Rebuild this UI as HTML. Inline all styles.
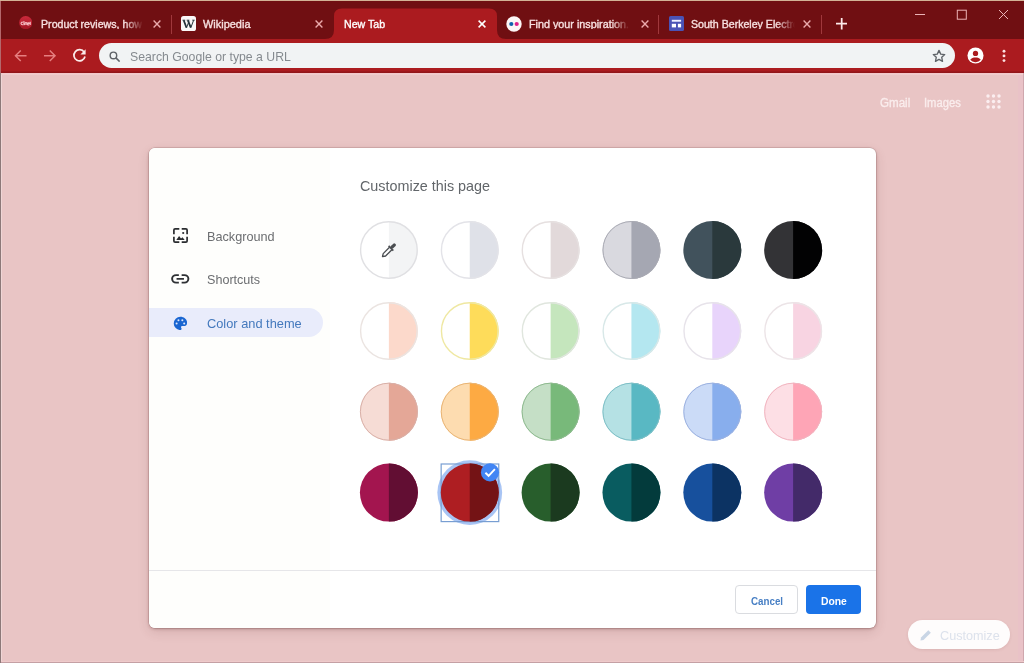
<!DOCTYPE html>
<html>
<head>
<meta charset="utf-8">
<title>New Tab</title>
<style>
*{box-sizing:border-box;margin:0;padding:0}
html,body{width:1024px;height:663px;overflow:hidden}
body{font-family:"Liberation Sans",sans-serif;background:#e9c5c5;position:relative}
.abs{position:absolute}
.t{position:absolute;white-space:nowrap;line-height:1;transform-origin:0 0}
#topline{left:0;top:0;width:1024px;height:1.400px;background:#d3b396}
#tabstrip{left:0;top:1px;width:1024px;height:38px;background:#700f12}
#toolbar{left:0;top:39px;width:1024px;height:34px;background:#ab1b1f}
#tbline{left:0;top:70.500px;width:1024px;height:2px;background:linear-gradient(#a1191d,#8e1619)}
#pageline{left:0;top:72.500px;width:1024px;height:2.500px;background:linear-gradient(#f6c6c9,#eccfcf)}
.sep{position:absolute;top:14.500px;width:1.500px;height:19px;background:#a0383c;margin-left:-.25px}
#omni{left:98.500px;top:43px;width:856.500px;height:25px;border-radius:13px;background:#f1f3f4}
#page{left:0;top:75px;width:1024px;height:588px;background:#e9c5c5}
#dialog{left:149px;top:148px;width:727px;height:480px;background:#fff;border-radius:6px;box-shadow:0 0 0 .5px rgba(110,70,70,.3),0 1px 3px rgba(90,40,40,.32),0 4px 12px rgba(90,40,40,.14);overflow:hidden}
#leftpanel{left:149px;top:148px;width:181px;height:480px;background:#fefefc;border-radius:6px 0 0 6px}
#pill{left:149px;top:308px;width:174px;height:29px;background:#e9ecfb;border-radius:0 15px 15px 0}
#divider{left:149px;top:570px;width:727px;height:1px;background:#e6e6e9}
#cancel{left:735px;top:585px;width:63px;height:29px;border:1px solid #dadce0;border-radius:4px;background:#fff}
#done{left:806px;top:585px;width:55px;height:29px;border-radius:4px;background:#1a73e8}
#custom{left:908px;top:620px;width:102px;height:29px;border-radius:15px;background:rgba(255,255,255,.95);box-shadow:0 1px 3px rgba(120,60,60,.12)}
#rightedge{left:1018px;top:75px;width:5px;height:586px;background:#e9c2c7}
#rightedge2{left:1023px;top:73px;width:1px;height:590px;background:#cfa7ad}
#botedge{left:0;top:661px;width:1024px;height:1px;background:#efcacb}
#botedge2{left:0;top:662px;width:1024px;height:1px;background:#c4a0a4}
#leftedge{left:0;top:1px;width:1px;height:72px;background:#b4686c}
#leftedge2{left:0;top:73px;width:1px;height:590px;background:#8d7878}
#leftedge3{left:1px;top:75px;width:1px;height:586px;background:#efd6d6}
</style>
</head>
<body>
<div class="abs" id="page"></div>
<div class="abs" id="tabstrip"></div>
<div class="abs" id="toolbar"></div>
<div class="abs" id="topline"></div>
<div class="abs" id="tbline"></div><div class="abs" id="pageline"></div>
<svg class="abs" style="left:320px;top:0" width="200" height="40" viewBox="320 0 200 40"><path d="M325 39Q334 39 334 30V16Q334 8.500 342 8.500H489Q497 8.500 497 16V30Q497 39 506 39Z" fill="#ab1b1f"/></svg>

<!-- favicons -->
<svg class="abs" style="left:18.700px;top:16px" width="13.400" height="13.400" viewBox="0 0 15 15"><defs><linearGradient id="cg" x1="0" y1="0" x2="0" y2="1"><stop offset="0" stop-color="#cc2a3c"/><stop offset="1" stop-color="#a31624"/></linearGradient></defs><circle cx="7.500" cy="7.500" r="7.400" fill="url(#cg)"/><g fill="none" stroke="#f4b9bf" stroke-width="1.300"><path d="M4.300 7.200A1.300 1.300 0 1 0 4.300 9.400M5.500 5.500V10.500M6.800 10V8.300A1 1 0 0 1 8.800 8.300V10M11.400 9.600A1.200 1.200 0 1 1 11.600 8.300H9.900M12.600 6.500V10"/></g></svg>
<svg class="abs" style="left:181.400px;top:16.300px" width="15" height="15" viewBox="0 0 15 15"><rect x="0" y="0" width="15" height="15" rx="2.600" fill="#fbf8f8"/><g stroke="#24323a" fill="none"><path d="M2.700 4.300L5.500 11.700M6.900 4.300L9.800 11.700" stroke-width="1.800"/><path d="M5.500 11.700L7.900 5.600M9.800 11.700L12.600 4.300" stroke-width="1"/><path d="M1.500 4.200H4.200M5.700 4.200H8.400M11.200 4.200H13.700" stroke-width=".9"/></g></svg>
<svg class="abs" style="left:506px;top:16px" width="16" height="16" viewBox="0 0 16 16"><circle cx="8" cy="8" r="7.700" fill="#fdf6f6"/><circle cx="5.300" cy="8" r="2.100" fill="#1261ad"/><circle cx="10.700" cy="8" r="2.100" fill="#e0218a"/></svg>
<svg class="abs" style="left:669px;top:16.200px" width="15" height="15" viewBox="0 0 15 15"><rect width="15" height="15" rx="1.600" fill="#4a53b6"/><rect x="2.800" y="3.800" width="9.300" height="1.900" fill="#eef0ff"/><rect x="2.800" y="7.800" width="4.200" height="3.600" fill="#fff"/><rect x="8.900" y="7.800" width="3.200" height="3.600" fill="#fff"/></svg>

<div class="t" style="left:41px;top:18.71px;font-size:10.5px;color:#f7e0e0;transform:scaleX(1.012);font-weight:normal;width:100.8px;overflow:hidden;-webkit-mask-image:linear-gradient(90deg,#000 0,#000 82%,transparent 100%);mask-image:linear-gradient(90deg,#000 0,#000 82%,transparent 100%);-webkit-text-stroke:0.350px currentColor;">Product reviews, how</div>
<div class="t" style="left:203.3px;top:18.71px;font-size:10.5px;color:#f7e0e0;transform:scaleX(1.043);font-weight:normal;-webkit-text-stroke:0.350px currentColor;">Wikipedia</div>
<div class="t" style="left:344.4px;top:18.71px;font-size:10.5px;color:#ffffff;transform:scaleX(1.012);font-weight:normal;-webkit-text-stroke:0.350px currentColor;">New Tab</div>
<div class="t" style="left:528.9px;top:18.71px;font-size:10.5px;color:#f7e0e0;transform:scaleX(1.026);font-weight:normal;width:98.4px;overflow:hidden;-webkit-mask-image:linear-gradient(90deg,#000 0,#000 82%,transparent 100%);mask-image:linear-gradient(90deg,#000 0,#000 82%,transparent 100%);-webkit-text-stroke:0.350px currentColor;">Find your inspiration.</div>
<div class="t" style="left:691.3px;top:18.71px;font-size:10.5px;color:#f7e0e0;transform:scaleX(1.01);font-weight:normal;width:103.0px;overflow:hidden;-webkit-mask-image:linear-gradient(90deg,#000 0,#000 82%,transparent 100%);mask-image:linear-gradient(90deg,#000 0,#000 82%,transparent 100%);-webkit-text-stroke:0.350px currentColor;">South Berkeley Electro</div>

<div class="sep" style="left:171px"></div>
<div class="sep" style="left:658px"></div>
<div class="sep" style="left:821px"></div>
<svg class="abs" style="left:151.6px;top:19px" width="10" height="10" viewBox="0 0 10 10"><path d="M1.600 1.600L8.400 8.400M8.400 1.600L1.600 8.400" stroke="#eaa9ab" stroke-width="1.4"/></svg><svg class="abs" style="left:314.4px;top:19px" width="10" height="10" viewBox="0 0 10 10"><path d="M1.600 1.600L8.400 8.400M8.400 1.600L1.600 8.400" stroke="#eaa9ab" stroke-width="1.4"/></svg><svg class="abs" style="left:477.1px;top:19px" width="10" height="10" viewBox="0 0 10 10"><path d="M1.600 1.600L8.400 8.400M8.400 1.600L1.600 8.400" stroke="#fff" stroke-width="1.5"/></svg><svg class="abs" style="left:639.5px;top:19px" width="10" height="10" viewBox="0 0 10 10"><path d="M1.600 1.600L8.400 8.400M8.400 1.600L1.600 8.400" stroke="#eaa9ab" stroke-width="1.4"/></svg><svg class="abs" style="left:802px;top:19px" width="10" height="10" viewBox="0 0 10 10"><path d="M1.600 1.600L8.400 8.400M8.400 1.600L1.600 8.400" stroke="#eaa9ab" stroke-width="1.4"/></svg>

<svg class="abs" style="left:836px;top:18.300px" width="11.400" height="11.400" viewBox="0 0 12 12"><path d="M6 0V12M0 6H12" stroke="#fdeaea" stroke-width="1.850"/></svg>
<svg class="abs" style="left:914px;top:8px" width="100" height="14" viewBox="0 0 100 14"><path d="M1 6.500H11" stroke="#ebb3b6" stroke-width="1"/><rect x="43.300" y="2.200" width="9" height="9" fill="none" stroke="#ebb3b6" stroke-width="1"/><path d="M85 2L94 11M94 2L85 11" stroke="#ebb3b6" stroke-width="1"/></svg>

<!-- toolbar icons -->
<svg class="abs" style="left:13.800px;top:48.700px" width="13.500" height="13.500" viewBox="0 0 14 14"><path d="M13 7H2M7 1.500L1.500 7L7 12.500" fill="none" stroke="#e67f80" stroke-width="1.500"/></svg>
<svg class="abs" style="left:43.300px;top:48.700px" width="13.500" height="13.500" viewBox="0 0 14 14"><path d="M1 7H12M7 1.500L12.500 7L7 12.500" fill="none" stroke="#e67f80" stroke-width="1.500"/></svg>
<svg class="abs" style="left:72px;top:48px" width="15" height="15" viewBox="0 0 15 15"><path d="M12.200 4.200A5.600 5.600 0 1 0 13 8.500" fill="none" stroke="#fbeaea" stroke-width="1.700"/><path d="M13.600 1.200V6.400H8.400Z" fill="#fbeaea"/></svg>

<div class="abs" id="omni"></div>
<svg class="abs" style="left:109.300px;top:50.500px" width="11.500" height="11.500" viewBox="0 0 13 13"><circle cx="5" cy="5" r="3.700" fill="none" stroke="#5f6368" stroke-width="1.600"/><path d="M7.800 7.800L12 12" stroke="#5f6368" stroke-width="1.700"/></svg>
<div class="t" style="left:129.5px;top:49.57px;font-size:13.5px;color:#858a8f;transform:scaleX(0.908);font-weight:normal;">Search Google or type a URL</div>
<svg class="abs" style="left:931px;top:48px" width="16" height="16" viewBox="0 0 24 24"><path d="M12 3.600l2.600 5.600 6 .7-4.500 4.100 1.200 6-5.300-3-5.300 3 1.200-6L3.400 9.900l6-.7z" fill="none" stroke="#5f6368" stroke-width="2" stroke-linejoin="round"/></svg>
<svg class="abs" style="left:966.800px;top:47.300px" width="17" height="17" viewBox="0 0 18 18"><circle cx="9" cy="9" r="8.500" fill="#fff"/><circle cx="9" cy="6.800" r="2.800" fill="#ab1b1f"/><path d="M3.400 13.600C4.600 11.600 6.600 11 9 11s4.400.6 5.600 2.600A7 7 0 0 1 9 16.200a7 7 0 0 1-5.600-2.600z" fill="#ab1b1f"/></svg>
<svg class="abs" style="left:1002.250px;top:48px" width="4" height="16" viewBox="0 0 4 16"><circle cx="2" cy="3.200" r="1.450" fill="#fbe2e2"/><circle cx="2" cy="7.900" r="1.450" fill="#fbe2e2"/><circle cx="2" cy="12.600" r="1.450" fill="#fbe2e2"/></svg>

<!-- NTP links -->
<div class="t" style="left:879.7px;top:97.04px;font-size:12px;color:#faeded;transform:scaleX(0.965);font-weight:normal;-webkit-text-stroke:0.300px currentColor;">Gmail</div>
<div class="t" style="left:923.8px;top:97.04px;font-size:12px;color:#faeded;transform:scaleX(0.935);font-weight:normal;-webkit-text-stroke:0.300px currentColor;">Images</div>
<svg class="abs" style="left:986px;top:94.100px" width="15" height="15" viewBox="0 0 15 15" fill="#fbeef0"><circle cx="2" cy="2" r="1.700"/><circle cx="7.500" cy="2" r="1.700"/><circle cx="13" cy="2" r="1.700"/><circle cx="2" cy="7.500" r="1.700"/><circle cx="7.500" cy="7.500" r="1.700"/><circle cx="13" cy="7.500" r="1.700"/><circle cx="2" cy="13" r="1.700"/><circle cx="7.500" cy="13" r="1.700"/><circle cx="13" cy="13" r="1.700"/></svg>

<div class="abs" id="custom"></div>
<svg class="abs" style="left:920px;top:629px" width="12" height="12" viewBox="0 0 12 12"><path d="M0.500 11.500l.5-3L8.300 1.200l2.500 2.500L3.500 11z" fill="#c9d5e5"/></svg>
<div class="t" style="left:939.8px;top:628.75px;font-size:13px;color:#dde2ec;transform:scaleX(0.972);font-weight:normal;">Customize</div>

<!-- dialog -->
<div class="abs" id="dialog"></div><div class="abs" id="leftpanel"></div>
<div class="t" style="left:359.9px;top:178.53px;font-size:14.5px;color:#62666a;transform:scaleX(0.99);font-weight:normal;">Customize this page</div>
<div class="abs" id="pill"></div>
<div class="t" style="left:206.9px;top:229.70px;font-size:13px;color:#6b6d70;transform:scaleX(0.975);font-weight:normal;">Background</div>
<div class="t" style="left:206.9px;top:273.00px;font-size:13px;color:#6b6d70;transform:scaleX(0.968);font-weight:normal;">Shortcuts</div>
<div class="t" style="left:206.9px;top:316.50px;font-size:13px;color:#4479bd;transform:scaleX(0.985);font-weight:normal;">Color and theme</div>

<svg class="abs" style="left:172.800px;top:228.100px" width="15" height="15" viewBox="0 0 15 15" fill="none" stroke="#2a2c2f" stroke-width="1.700"><path d="M0.900 6.300V2.100Q0.900 0.900 2.100 0.900H6.300M8.700 0.900H12.900Q14.100 0.900 14.100 2.100V6.300M14.100 8.700V12.900Q14.100 14.100 12.900 14.100H8.700M6.300 14.100H2.100Q0.900 14.100 0.900 12.900V8.700"/><path d="M3.300 11.900L6.100 8.100L8 10.500L9.500 9.200L11.700 11.900Z" fill="#2a2c2f" stroke="none"/><circle cx="10.200" cy="5" r="1.100" fill="#2a2c2f" stroke="none"/></svg>
<svg class="abs" style="left:171px;top:274.300px" width="18.500" height="9.700" viewBox="0 0 20 11" preserveAspectRatio="none" fill="none" stroke="#2e3134" stroke-width="2.100"><path d="M8.500 1.200H5.500a4.300 4.300 0 0 0 0 8.600H8.500M11.500 1.200H14.500a4.300 4.300 0 0 1 0 8.600H11.500M6 5.500H14"/></svg>
<svg class="abs" style="left:172.600px;top:315.600px" width="14.800" height="14.800" viewBox="0 0 16 16"><path d="M8 .8a7.200 7.200 0 0 0 0 14.400c.8 0 1.300-.6 1.300-1.300 0-.4-.1-.6-.3-.9-.2-.2-.3-.5-.3-.8 0-.7.600-1.300 1.300-1.300h1.500a3.700 3.700 0 0 0 3.700-3.700C15.200 3.600 12 .8 8 .8z" fill="#1a66d1"/><circle cx="3.900" cy="8" r="1.100" fill="#dfe8fb"/><circle cx="5.900" cy="4.600" r="1.100" fill="#dfe8fb"/><circle cx="10.100" cy="4.600" r="1.100" fill="#dfe8fb"/><circle cx="12.100" cy="8" r="1.100" fill="#dfe8fb"/></svg>

<svg class="abs" id="grid" style="left:340px;top:200px" width="520" height="340" viewBox="340 200 520 340">
<circle cx="388.9" cy="250" r="29" fill="#ffffff"/>
<path d="M388.9 221A29 29 0 0 1 388.9 279Z" fill="#f3f4f5"/>
<circle cx="388.9" cy="250" r="28.3" fill="none" stroke="#e0e0e3" stroke-width="1.4"/>
<circle cx="469.75" cy="250" r="29" fill="#ffffff"/>
<path d="M469.75 221A29 29 0 0 1 469.75 279Z" fill="#dfe1e8"/>
<circle cx="469.75" cy="250" r="28.3" fill="none" stroke="#e3e3e8" stroke-width="1.4"/>
<circle cx="550.6" cy="250" r="29" fill="#ffffff"/>
<path d="M550.6 221A29 29 0 0 1 550.6 279Z" fill="#e2d9da"/>
<circle cx="550.6" cy="250" r="28.3" fill="none" stroke="#e6e0e0" stroke-width="1.4"/>
<circle cx="631.45" cy="250" r="29" fill="#d9d9df"/>
<path d="M631.45 221A29 29 0 0 1 631.45 279Z" fill="#a5a7b2"/>
<circle cx="631.45" cy="250" r="28.5" fill="none" stroke="#a9aab3" stroke-width="1.0"/>
<circle cx="712.3" cy="250" r="29" fill="#41525c"/>
<path d="M712.3 221A29 29 0 0 1 712.3 279Z" fill="#2a393c"/>
<circle cx="793.15" cy="250" r="29" fill="#333336"/>
<path d="M793.15 221A29 29 0 0 1 793.15 279Z" fill="#020203"/>
<circle cx="388.9" cy="331" r="29" fill="#ffffff"/>
<path d="M388.9 302A29 29 0 0 1 388.9 360Z" fill="#fcd9cb"/>
<circle cx="388.9" cy="331" r="28.3" fill="none" stroke="#ebe4e1" stroke-width="1.4"/>
<circle cx="469.75" cy="331" r="29" fill="#ffffff"/>
<path d="M469.75 302A29 29 0 0 1 469.75 360Z" fill="#fedc5a"/>
<circle cx="469.75" cy="331" r="28.3" fill="none" stroke="#efe8a2" stroke-width="1.4"/>
<circle cx="550.6" cy="331" r="29" fill="#ffffff"/>
<path d="M550.6 302A29 29 0 0 1 550.6 360Z" fill="#c5e6bd"/>
<circle cx="550.6" cy="331" r="28.3" fill="none" stroke="#e0e6de" stroke-width="1.4"/>
<circle cx="631.45" cy="331" r="29" fill="#ffffff"/>
<path d="M631.45 302A29 29 0 0 1 631.45 360Z" fill="#b4e7f0"/>
<circle cx="631.45" cy="331" r="28.3" fill="none" stroke="#d8e8e8" stroke-width="1.4"/>
<circle cx="712.3" cy="331" r="29" fill="#ffffff"/>
<path d="M712.3 302A29 29 0 0 1 712.3 360Z" fill="#e8d4fb"/>
<circle cx="712.3" cy="331" r="28.3" fill="none" stroke="#e7e3ea" stroke-width="1.4"/>
<circle cx="793.15" cy="331" r="29" fill="#ffffff"/>
<path d="M793.15 302A29 29 0 0 1 793.15 360Z" fill="#f8d4e2"/>
<circle cx="793.15" cy="331" r="28.3" fill="none" stroke="#ece4e7" stroke-width="1.4"/>
<circle cx="388.9" cy="411.7" r="29" fill="#f6dcd5"/>
<path d="M388.9 382.7A29 29 0 0 1 388.9 440.7Z" fill="#e4a797"/>
<circle cx="388.9" cy="411.7" r="28.5" fill="none" stroke="#d9b0a8" stroke-width="1.0"/>
<circle cx="469.75" cy="411.7" r="29" fill="#fddcb0"/>
<path d="M469.75 382.7A29 29 0 0 1 469.75 440.7Z" fill="#fdaa43"/>
<circle cx="469.75" cy="411.7" r="28.5" fill="none" stroke="#e9b576" stroke-width="1.0"/>
<circle cx="550.6" cy="411.7" r="29" fill="#c5dfc6"/>
<path d="M550.6 382.7A29 29 0 0 1 550.6 440.7Z" fill="#78b97a"/>
<circle cx="550.6" cy="411.7" r="28.5" fill="none" stroke="#8fba90" stroke-width="1.0"/>
<circle cx="631.45" cy="411.7" r="29" fill="#b5e1e4"/>
<path d="M631.45 382.7A29 29 0 0 1 631.45 440.7Z" fill="#59b8c3"/>
<circle cx="631.45" cy="411.7" r="28.5" fill="none" stroke="#7fbfc6" stroke-width="1.0"/>
<circle cx="712.3" cy="411.7" r="29" fill="#cbdbf7"/>
<path d="M712.3 382.7A29 29 0 0 1 712.3 440.7Z" fill="#88aeed"/>
<circle cx="712.3" cy="411.7" r="28.5" fill="none" stroke="#9db2e0" stroke-width="1.0"/>
<circle cx="793.15" cy="411.7" r="29" fill="#fddfe5"/>
<path d="M793.15 382.7A29 29 0 0 1 793.15 440.7Z" fill="#fea5b6"/>
<circle cx="793.15" cy="411.7" r="28.5" fill="none" stroke="#f1b5c0" stroke-width="1.0"/>
<circle cx="388.9" cy="492.6" r="29" fill="#a3154f"/>
<path d="M388.9 463.6A29 29 0 0 1 388.9 521.6Z" fill="#620e33"/>
<circle cx="469.75" cy="492.6" r="32.4" fill="#a8c4f4"/>
<rect x="441.15" y="464.00" width="57.6" height="57.6" fill="none" stroke="#789ed2" stroke-width="1.200"/>
<circle cx="469.75" cy="492.6" r="29" fill="#ae1e22"/>
<path d="M469.75 463.6A29 29 0 0 1 469.75 521.6Z" fill="#741315"/>
<circle cx="550.6" cy="492.6" r="29" fill="#285e2c"/>
<path d="M550.6 463.6A29 29 0 0 1 550.6 521.6Z" fill="#1b3a1f"/>
<circle cx="631.45" cy="492.6" r="29" fill="#095c60"/>
<path d="M631.45 463.6A29 29 0 0 1 631.45 521.6Z" fill="#033b3c"/>
<circle cx="712.3" cy="492.6" r="29" fill="#17509d"/>
<path d="M712.3 463.6A29 29 0 0 1 712.3 521.6Z" fill="#0c3363"/>
<circle cx="793.15" cy="492.6" r="29" fill="#6f3ea5"/>
<path d="M793.15 463.6A29 29 0 0 1 793.15 521.6Z" fill="#432a69"/>
<g transform="translate(388.850 250.350) rotate(45)" fill="none" stroke="#4a4d51"><path d="M-1.700 -2.600V6.300L0 9L1.700 6.300V-2.600" stroke-width="1.300" stroke-linejoin="round"/><path d="M-3.300 -3H3.300" stroke-width="1.600"/><rect x="-1.600" y="-9.200" width="3.200" height="6" rx="1.300" fill="#4a4d51" stroke="none"/></g>
<circle cx="490" cy="472.400" r="9.100" fill="#4285f4"/><path d="M485.400 472.700L488.600 475.800L494.900 469.200" fill="none" stroke="#fff" stroke-width="1.900"/>
</svg>

<div class="abs" id="divider"></div>
<div class="abs" id="cancel"></div>
<div class="abs" id="done"></div>
<div class="t" style="left:750.8px;top:595.57px;font-size:11.5px;color:#477fc4;transform:scaleX(0.85);font-weight:bold;">Cancel</div>
<div class="t" style="left:820.5px;top:595.57px;font-size:11.5px;color:#ffffff;transform:scaleX(0.9);font-weight:bold;">Done</div>
<div class="abs" id="rightedge"></div><div class="abs" id="rightedge2"></div>
<div class="abs" id="botedge"></div><div class="abs" id="botedge2"></div><div class="abs" id="leftedge"></div><div class="abs" id="leftedge2"></div><div class="abs" id="leftedge3"></div>
</body>
</html>
